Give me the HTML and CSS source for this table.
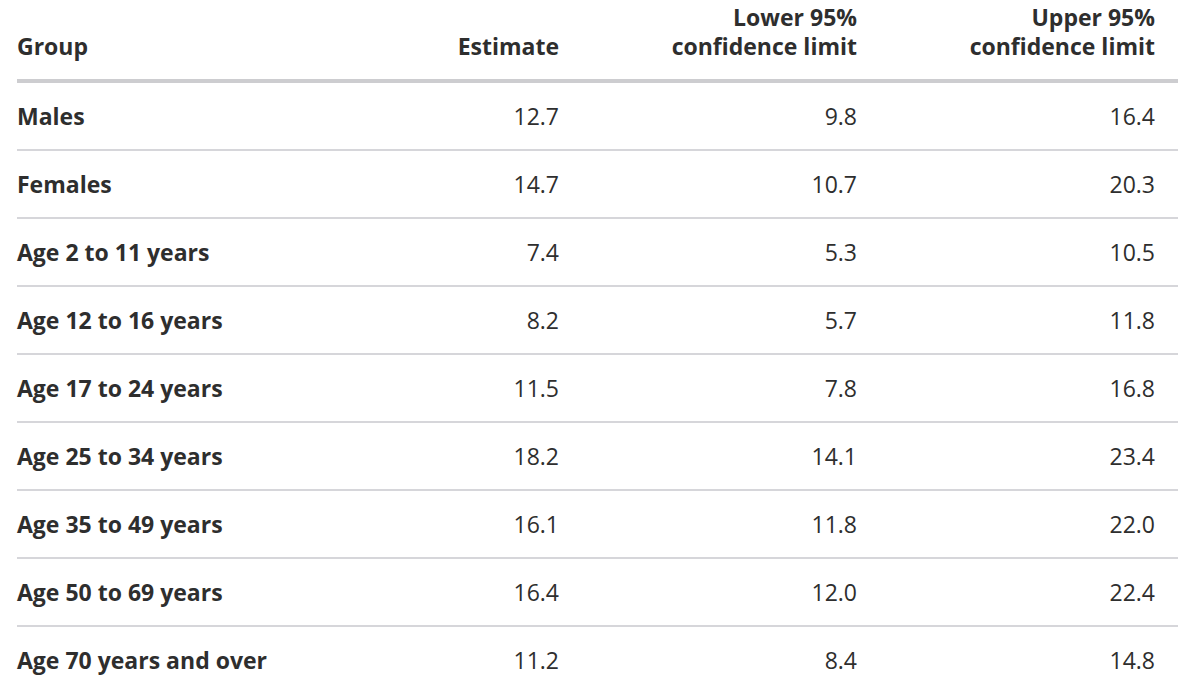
FILE: index.html
```html
<!DOCTYPE html>
<html>
<head>
<meta charset="utf-8">
<link rel="stylesheet" href="styles.css">
</head>
<body>
<div class="wrap">
<table class="data">
<colgroup>
<col class="c-group"><col class="c-num"><col class="c-num"><col class="c-num">
</colgroup>
<thead>
<tr>
<th class="lbl">Group</th>
<th class="num">Estimate</th>
<th class="num">Lower 95%<br>confidence limit</th>
<th class="num">Upper 95%<br>confidence limit</th>
</tr>
</thead>
<tbody>
<tr><td class="lbl">Males</td><td class="num">12.7</td><td class="num">9.8</td><td class="num">16.4</td></tr>
<tr><td class="lbl">Females</td><td class="num">14.7</td><td class="num">10.7</td><td class="num">20.3</td></tr>
<tr><td class="lbl">Age 2 to 11 years</td><td class="num">7.4</td><td class="num">5.3</td><td class="num">10.5</td></tr>
<tr><td class="lbl">Age 12 to 16 years</td><td class="num">8.2</td><td class="num">5.7</td><td class="num">11.8</td></tr>
<tr><td class="lbl">Age 17 to 24 years</td><td class="num">11.5</td><td class="num">7.8</td><td class="num">16.8</td></tr>
<tr><td class="lbl">Age 25 to 34 years</td><td class="num">18.2</td><td class="num">14.1</td><td class="num">23.4</td></tr>
<tr><td class="lbl">Age 35 to 49 years</td><td class="num">16.1</td><td class="num">11.8</td><td class="num">22.0</td></tr>
<tr><td class="lbl">Age 50 to 69 years</td><td class="num">16.4</td><td class="num">12.0</td><td class="num">22.4</td></tr>
<tr><td class="lbl">Age 70 years and over</td><td class="num">11.2</td><td class="num">8.4</td><td class="num">14.8</td></tr>
</tbody>
</table>
</div>
</body>
</html>
```
FILE: styles.css
```css
html, body {
  margin: 0;
  padding: 0;
  background: #ffffff;
}
body {
  font-family: "Open Sans", "Noto Sans", sans-serif;
  color: #2e2e2e;
  font-size: 23px;
}
.wrap {
  padding: 3px 0 0 17px;
}
.data {
  border-collapse: collapse;
  width: 1161px;
  table-layout: fixed;
}
.c-group { width: 267px; }
.c-num { width: 298px; }
.data th {
  font-weight: 700;
  line-height: 29px;
  vertical-align: bottom;
  padding: 0 23px 18px 0;
  border-bottom: 4px solid #cdcdd0;
}
.data td {
  line-height: 29px;
  height: 66px;
  padding: 0 23px 0 0;
  vertical-align: middle;
  border-bottom: 2px solid #d6d6da;
}
.data tbody tr:last-child td {
  border-bottom: none;
}
.data .lbl {
  text-align: left;
  font-weight: 700;
  white-space: nowrap;
  padding-right: 0;
}
.num {
  text-align: right;
  font-weight: 400;
}
.data th.num {
  font-weight: 700;
}
```
